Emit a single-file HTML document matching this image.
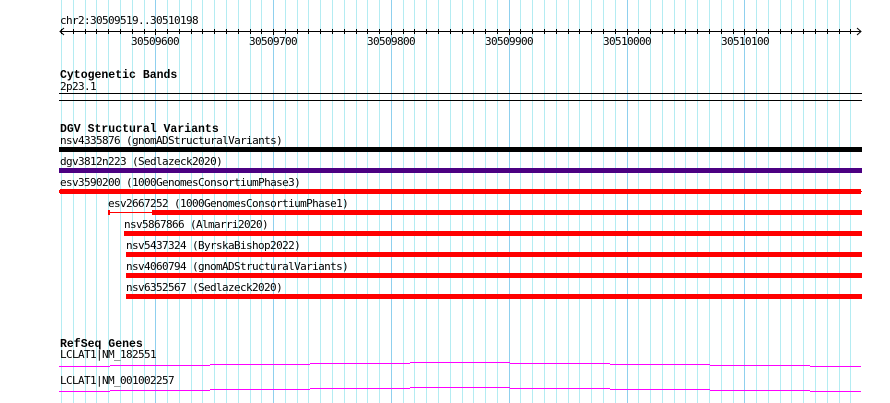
<!DOCTYPE html>
<html><head><meta charset="utf-8"><style>
html,body{margin:0;padding:0;background:#fff;width:890px;height:403px;overflow:hidden}
svg{display:block}
text{font-family:"DejaVu Sans Mono","Liberation Mono",monospace;font-size:11px;letter-spacing:-0.62px;fill:#000}
.b{font-family:"Liberation Mono",monospace;font-weight:bold;font-size:11.5px;letter-spacing:0}
</style></head><body>
<svg width="890" height="403" viewBox="0 0 890 403" xmlns="http://www.w3.org/2000/svg">
<g id="grid" stroke-width="1" shape-rendering="crispEdges"></g>
<line x1="60" y1="31.5" x2="861" y2="31.5" stroke="#000" shape-rendering="crispEdges"/>
<path d="M64 28 L60 31.5 L64 35 M857 28 L861 31.5 L857 35" fill="none" stroke="#000"/>
<g id="ticks" stroke="#000" shape-rendering="crispEdges"></g>
<text x="60" y="24">chr2:30509519..30510198</text>
<text x="131" y="45">30509600</text>
<text x="249" y="45">30509700</text>
<text x="367" y="45">30509800</text>
<text x="485" y="45">30509900</text>
<text x="603" y="45">30510000</text>
<text x="721" y="45">30510100</text>
<text class="b" x="60" y="78">Cytogenetic Bands</text>
<text x="60" y="90">2p23.1</text>
<g shape-rendering="crispEdges">
<rect x="59" y="93" width="803" height="1" fill="#000"/>
<rect x="59" y="100" width="803" height="1" fill="#000"/>
</g>
<text class="b" x="60" y="132">DGV Structural Variants</text>
<text x="60" y="144">nsv4335876 (gnomADStructuralVariants)</text>
<rect x="59" y="147" width="803" height="5" fill="#000"/>
<text x="60" y="165">dgv3812n223 (Sedlazeck2020)</text>
<rect x="59" y="168" width="803" height="5" fill="#4b0082"/>
<text x="60" y="186">esv3590200 (1000GenomesConsortiumPhase3)</text>
<rect x="60" y="189" width="801" height="5" fill="#f00"/>
<rect x="59" y="190" width="1" height="3" fill="#f00"/><rect x="861" y="191" width="1" height="1" fill="#f00"/>
<text x="108" y="207">esv2667252 (1000GenomesConsortiumPhase1)</text>
<rect x="108" y="212" width="44" height="1" fill="#f00"/>
<rect x="108" y="210" width="2" height="5" fill="#f00"/>
<rect x="152" y="210" width="710" height="5" fill="#f00"/>
<text x="124" y="228">nsv5867866 (Almarri2020)</text>
<rect x="124" y="231" width="738" height="5" fill="#f00"/>
<text x="126" y="249">nsv5437324 (ByrskaBishop2022)</text>
<rect x="126" y="252" width="736" height="5" fill="#f00"/>
<text x="126" y="270">nsv4060794 (gnomADStructuralVariants)</text>
<rect x="126" y="273" width="736" height="5" fill="#f00"/>
<text x="126" y="291">nsv6352567 (Sedlazeck2020)</text>
<rect x="126" y="294" width="736" height="5" fill="#f00"/>
<text class="b" x="60" y="347">RefSeq Genes</text>
<text x="60" y="358">LCLAT1|NM_182551</text>
<text x="60" y="384">LCLAT1|NM_001002257</text>
<g id="genes" fill="#f0f" shape-rendering="crispEdges"></g>
</svg>
<script>
var g=document.getElementById('grid'),t=document.getElementById('ticks'),ns='http://www.w3.org/2000/svg';
for(var i=-8;i<=59;i++){var x=Math.round(155.3+i*11.78);var l=document.createElementNS(ns,'line');
l.setAttribute('x1',x+.5);l.setAttribute('x2',x+.5);l.setAttribute('y1',0);l.setAttribute('y2',403);
l.setAttribute('stroke',(i%10==0)?'#8fd0ee':'#b4ecf2');g.appendChild(l);
var k=document.createElementNS(ns,'line');k.setAttribute('x1',x+.5);k.setAttribute('x2',x+.5);k.setAttribute('y1',29);k.setAttribute('y2',(i%10==0)?35:34);t.appendChild(k);}
var segs=[[59,110,366],[110,210,365],[210,310,364],[310,410,363],[410,510,362],[510,610,363],[610,710,364],[710,810,365],[810,861,366]];
var G=document.getElementById('genes');
segs.forEach(function(s){[0,25].forEach(function(o){var r=document.createElementNS(ns,'rect');r.setAttribute('x',s[0]);r.setAttribute('width',s[1]-s[0]);r.setAttribute('y',s[2]+o);r.setAttribute('height',1);G.appendChild(r);});});
</script>
</body></html>
